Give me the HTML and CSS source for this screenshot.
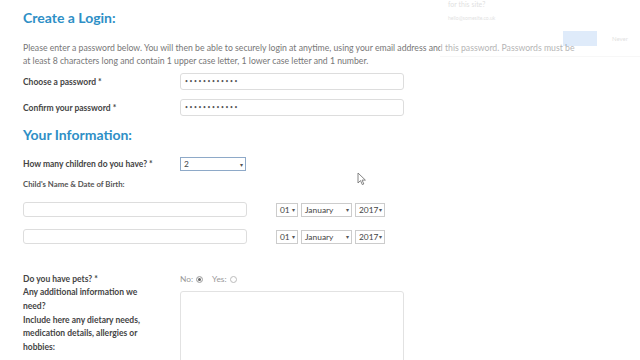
FILE: index.html
```html
<!DOCTYPE html>
<html lang="en">
<head>
    <meta charset="UTF-8">
    <meta name="viewport" content="width=device-width, initial-scale=1.0">
    <title>Registration</title>
    <link rel="stylesheet" href="styles.css">
</head>
<body>
    <div class="save-prompt">
        <div class="prompt-title">for this site?</div>
        <div class="prompt-email">hello@somesite.co.uk</div>
        <div class="prompt-buttons">
            <span class="btn-save"></span>
            <span class="btn-never">Never</span>
        </div>
    </div>

    <div class="container">
        <h2 class="section-title first">Create a Login:</h2>
        <p class="intro">Please enter a password below. You will then be able to securely login at anytime, using your email address and this password. Passwords must be at least 8 characters long and contain 1 upper case letter, 1 lower case letter and 1 number.</p>

        <div class="row">
            <label>Choose a password *</label>
            <div class="field">••••••••••••</div>
        </div>
        <div class="row">
            <label>Confirm your password *</label>
            <div class="field">••••••••••••</div>
        </div>

        <h2 class="section-title">Your Information:</h2>

        <div class="row children">
            <label>How many children do you have? *</label>
            <div class="select focused"><span>2</span><span class="arrow">▾</span></div>
        </div>
        <div class="sub-label">Child's Name &amp; Date of Birth:</div>

        <div class="child-row">
            <div class="field name"></div>
            <div class="dob">
                <div class="select day"><span>01</span><span class="arrow">▾</span></div>
                <div class="select month"><span>January</span><span class="arrow">▾</span></div>
                <div class="select year"><span>2017</span><span class="arrow">▾</span></div>
            </div>
        </div>
        <div class="child-row">
            <div class="field name"></div>
            <div class="dob">
                <div class="select day"><span>01</span><span class="arrow">▾</span></div>
                <div class="select month"><span>January</span><span class="arrow">▾</span></div>
                <div class="select year"><span>2017</span><span class="arrow">▾</span></div>
            </div>
        </div>

        <div class="row pets">
            <label>Do you have pets? *</label>
            <div class="radios">
                <span>No:</span><span class="radio checked"></span>
                <span class="yes">Yes:</span><span class="radio"></span>
            </div>
        </div>

        <div class="row extra">
            <label>Any additional information we need?<br>Include here any dietary needs, medication details, allergies or hobbies:</label>
            <div class="textarea"></div>
        </div>
    </div>

    <svg class="cursor" width="10" height="14" viewBox="0 0 10 14">
        <path d="M1 1 L1 11 L3.5 8.6 L5.3 12.6 L6.8 12 L5.1 8.1 L8.4 8.1 Z" fill="#fff" stroke="#777" stroke-width="0.9" stroke-linejoin="round"/>
    </svg>
</body>
</html>
```

FILE: styles.css
```css
body {
    font-family: Lato, "Open Sans", sans-serif;
    background-color: #fff;
    color: #444;
    margin: 0;
    padding: 0;
}
.container {
    padding: 0 23px;
}
.section-title {
    font-size: 14px;
    font-weight: 700;
    color: #2e8fc6;
    margin: 9px 0 0;
    line-height: 20px;
}
.section-title.first {
    margin-top: 8px;
}
.intro {
    max-width: 560px;
    font-size: 8.7px;
    line-height: 13px;
    color: #777;
    margin: 13px 0 0;
}
.row {
    display: flex;
    align-items: center;
    margin-top: 6px;
}
.row label {
    width: 157px;
    font-size: 8.5px;
    font-weight: 700;
    color: #444;
}
.field {
    width: 224px;
    height: 17px;
    box-sizing: border-box;
    border: 1px solid #ddd;
    border-radius: 3px;
    font-size: 5px;
    line-height: 15px;
    padding-left: 4px;
    color: #555;
    letter-spacing: 1.6px;
}
.row + .row {
    margin-top: 9px;
}
.select {
    display: flex;
    justify-content: space-between;
    align-items: center;
    box-sizing: border-box;
    height: 14px;
    border: 1px solid #ccc;
    font-size: 8.4px;
    color: #444;
    padding: 0 2px 0 3px;
    background: #fff;
}
.select .arrow {
    font-size: 6px;
    color: #555;
}
.select.focused {
    width: 66px;
    border-color: #8ea9c8;
}
.children {
    margin-top: 12px;
}
.sub-label {
    font-size: 7.8px;
    font-weight: 700;
    color: #555;
    margin-top: 8px;
}
.child-row {
    display: flex;
    align-items: center;
    margin-top: 13px;
}
.child-row + .child-row {
    margin-top: 12px;
}
.field.name {
    width: 224px;
    height: 15px;
}
.dob {
    display: flex;
    gap: 3px;
    margin-left: 29px;
}
.select.day {
    width: 22px;
}
.select.month {
    width: 51px;
}
.select.year {
    width: 30px;
}
.row.pets {
    margin-top: 30px;
}
.radios {
    display: flex;
    align-items: center;
    font-size: 8.4px;
    color: #999;
}
.radio {
    width: 5px;
    height: 5px;
    border-radius: 50%;
    border: 1px solid #bbb;
    margin-left: 3px;
}
.radio.checked {
    background: #666;
    box-shadow: inset 0 0 0 1px #fff;
}
.radios .yes {
    margin-left: 9px;
}
.row.extra {
    align-items: flex-start;
    margin-top: 2px;
}
.extra label {
    width: 126px;
    margin-right: 31px;
    line-height: 13.8px;
}
.textarea {
    width: 224px;
    height: 80px;
    box-sizing: border-box;
    border: 1px solid #e2e2e2;
    border-radius: 3px;
    margin-top: 5px;
}
.save-prompt {
    position: absolute;
    top: -6px;
    left: 440px;
    width: 200px;
    height: 62px;
    border-bottom: 1px solid #eee;
    background: #fff;
    opacity: 0.45;
    font-size: 6px;
    color: #bbb;
}
.prompt-title {
    padding-left: 8px;
    font-size: 7px;
    margin-top: 6px;
}
.prompt-email {
    padding-left: 8px;
    margin-top: 7px;
    font-size: 5px;
}
.prompt-buttons {
    display: flex;
    align-items: center;
    margin-top: 10px;
    padding-left: 123px;
}
.btn-save {
    width: 34px;
    height: 15px;
    background: #b9d4f5;
}
.btn-never {
    margin-left: 15px;
}
.cursor {
    position: absolute;
    left: 357px;
    top: 172px;
}
```
